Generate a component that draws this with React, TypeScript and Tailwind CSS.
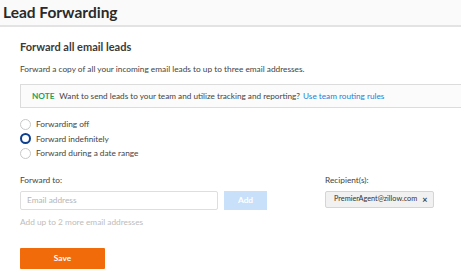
const options = [
  { label: "Forwarding off", checked: false },
  { label: "Forward indefinitely", checked: true },
  { label: "Forward during a date range", checked: false },
];

export default function App() {
  return (
    <div className="h-[280px] w-[461px] overflow-hidden bg-white text-[#333] font-['Lato',Arial,sans-serif]">
      <header className="h-[27px] border-b-2 border-[#e3e3e3] bg-[#fafafa] pl-[3px]">
        <h1 className="text-[15.5px] font-bold leading-[25px] text-[#2a2a2a]">Lead Forwarding</h1>
      </header>

      <main className="pl-[20px]">
        <h2 className="mt-[13px] text-[11px] font-bold leading-[14px] text-[#3a3a3a]">Forward all email leads</h2>
        <p className="mt-[9px] text-[8.3px] leading-[12px] text-[#444]">
          Forward a copy of all your incoming email leads to up to three email addresses.
        </p>

        <div className="mt-[9px] -mr-[20px] flex h-[24px] items-center border border-[#dcdcdc] bg-[#fbfbfb] pl-[11px] text-[8.2px]">
          <span className="font-bold text-[#1aa15a]">NOTE</span>
          <span className="ml-[5px] text-[#444]">Want to send leads to your team and utilize tracking and reporting?</span>
          <span className="ml-[3px] text-[#1f7fd9]">Use team routing rules</span>
        </div>

        <div className="mt-[9px] flex flex-col">
          {options.map((o) => (
            <label key={o.label} className="flex h-[14.5px] items-center gap-[5px] text-[8.3px] text-[#444]">
              <span
                className={
                  o.checked
                    ? "h-[11px] w-[11px] rounded-full border-[2.5px] border-[#0d3f8f] bg-white"
                    : "h-[11px] w-[11px] rounded-full border border-[#c8c8c8] bg-white"
                }
              />
              {o.label}
            </label>
          ))}
        </div>

        <div className="mt-[13px] flex">
          <div className="w-[305px]">
            <div className="text-[8.3px] leading-[12px] text-[#444]">Forward to:</div>
            <div className="mt-[5px] flex items-center gap-[6px]">
              <div className="flex h-[19px] w-[198px] items-center rounded-[2px] border border-[#dedede] pl-[6px] text-[8.3px] text-[#b5b5b5]">
                Email address
              </div>
              <div className="flex h-[19px] w-[43px] items-center justify-center bg-[#c8e0fa] text-[8.3px] font-bold text-white">
                Add
              </div>
            </div>
            <div className="mt-[6px] text-[8.3px] leading-[12px] text-[#bdbdbd]">Add up to 2 more email addresses</div>
          </div>
          <div>
            <div className="text-[8.3px] leading-[12px] text-[#444]">Recipient(s):</div>
            <div className="mt-[5px] flex h-[17px] w-[109px] items-center gap-[5px] rounded-[2px] border border-[#d5d5d5] bg-[#f1f1f1] pl-[8px] text-[7.3px] text-[#333]">
              PremierAgent@zillow.com
              <span className="text-[9px] font-bold leading-none text-[#444]">×</span>
            </div>
          </div>
        </div>

        <button className="mt-[20px] flex h-[21px] w-[85px] items-center justify-center rounded-[1px] bg-[#f26b0a] text-[8.3px] font-bold text-white">
          Save
        </button>
      </main>
    </div>
  );
}
